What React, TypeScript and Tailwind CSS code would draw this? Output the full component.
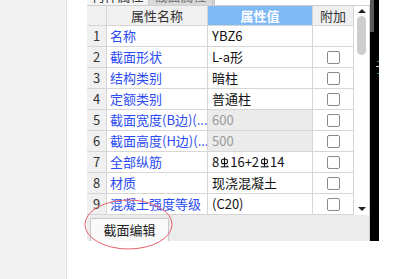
import React from 'react';

type Row = { no: number; name: string; value: React.ReactNode; dim?: boolean; check: boolean };

const Rebar = () => (
  <svg width="9" height="11" viewBox="0 0 9 11" className="mx-[1px] inline-block">
    <rect x="1.6" y="2.2" width="5.8" height="4.4" rx="1.2" fill="none" stroke="#111" strokeWidth="1.1" />
    <line x1="4.5" y1="0.3" x2="4.5" y2="9.8" stroke="#111" strokeWidth="1.1" />
    <line x1="0.6" y1="9.8" x2="8.4" y2="9.8" stroke="#111" strokeWidth="1.1" />
    <line x1="7" y1="8.2" x2="8.2" y2="9.6" stroke="#111" strokeWidth="0.9" />
  </svg>
);

const rows: Row[] = [
  { no: 1, name: '名称', value: 'YBZ6', check: false },
  { no: 2, name: '截面形状', value: 'L-a形', check: true },
  { no: 3, name: '结构类别', value: '暗柱', check: true },
  { no: 4, name: '定额类别', value: '普通柱', check: true },
  { no: 5, name: '截面宽度(B边)(...', value: '600', dim: true, check: true },
  { no: 6, name: '截面高度(H边)(...', value: '500', dim: true, check: true },
  {
    no: 7,
    name: '全部纵筋',
    value: (
      <span className="flex items-center">
        8<Rebar />16+2<Rebar />14
      </span>
    ),
    check: true,
  },
  { no: 8, name: '材质', value: '现浇混凝土', check: true },
  { no: 9, name: '混凝土强度等级', value: '(C20)', check: true },
];

export default function App() {
  return (
    <div
      className="relative flex w-[417px] h-[279px] overflow-hidden bg-white text-[13px] text-[#111]"
      style={{ fontFamily: '"Noto Sans CJK SC", "Noto Sans", sans-serif' }}
    >
      <div className="w-[67px] h-full bg-[#f3f3f4] border-r border-[#e2e2e4]" />
      <div className="w-[20px]" />

      <div className="flex h-[241px]">
        <div className="flex flex-col w-[283px]">
          {/* tab strip, mostly scrolled out of view */}
          <div className="flex h-[6px] border-b border-[#cfcfcf] overflow-hidden">
            <div className="w-[62px] bg-[#f4f4f4] border-r border-[#c8c8c8] flex items-end justify-center">
              <span className="leading-[13px] mb-[3px] text-[#333]">构件属性</span>
            </div>
            <div className="w-[64px] bg-[#d9d9d9] border-r border-[#c4c4c4] flex items-end justify-center">
              <span className="leading-[13px] mb-[3px] text-[#777]">截面属性</span>
            </div>
            <div className="w-[2px] bg-[#d9d9d9] border-r border-[#c4c4c4]" />
            <div className="flex-1 bg-white" />
          </div>

          <div className="flex h-[209px]">
            <div className="w-[267px] flex flex-col">
              <div className="flex h-[20px] border-b border-[#d6d6d6]">
                <div className="w-[20px] bg-[#f0f0f0] border-r border-[#d6d6d6]" />
                <div className="w-[101px] bg-[#f0f0f0] border-r border-[#d6d6d6] flex items-center justify-center text-[#333]">
                  属性名称
                </div>
                <div className="w-[105px] bg-[#7fbaf6] border-r border-[#d6d6d6] flex items-center justify-center text-white font-bold">
                  属性值
                </div>
                <div className="w-[41px] bg-[#f0f0f0] border-r border-[#d6d6d6] flex items-center justify-center text-[#333]">
                  附加
                </div>
              </div>
              {rows.map((r) => (
                <div key={r.no} className="flex h-[21px] border-b border-[#d6d6d6]">
                  <div className="w-[20px] bg-[#f0f0f0] border-r border-[#d6d6d6] flex items-center justify-center text-[#333]">
                    {r.no}
                  </div>
                  <div className="w-[101px] border-r border-[#d6d6d6] flex items-center pl-[3px] text-[#2b4cf2] whitespace-nowrap overflow-hidden">
                    {r.name}
                  </div>
                  <div
                    className={`w-[105px] border-r border-[#d6d6d6] flex items-center pl-[4px] whitespace-nowrap ${
                      r.dim ? 'bg-[#ebebeb] text-[#9a9a9a]' : 'text-[#111]'
                    }`}
                  >
                    {r.value}
                  </div>
                  <div className="w-[41px] border-r border-[#d6d6d6] flex items-center justify-center">
                    {r.check && <div className="w-[13px] h-[13px] rounded-[2px] border border-[#8a8a8a] bg-white" />}
                  </div>
                </div>
              ))}
            </div>
            {/* scrollbar */}
            <div className="w-[16px] border-r border-[#d0d0d0] bg-white flex flex-col items-center">
              <div className="mt-[3px] w-0 h-0 border-l-[4px] border-r-[4px] border-b-[4px] border-l-transparent border-r-transparent border-b-[#222]" />
              <div className="mt-[3px] w-[9px] h-[39px] rounded-full bg-[#cdcdcd]" />
              <div className="flex-1" />
              <div className="mb-[4px] w-0 h-0 border-l-[4px] border-r-[4px] border-t-[4px] border-l-transparent border-r-transparent border-t-[#222]" />
            </div>
          </div>

          <div className="flex-1 bg-[#ececec] border-r border-[#d0d0d0] pl-[3px] pt-[3px]">
            <div className="w-[79px] h-full bg-[#f9f9f9] border border-b-0 border-[#c8c8c8] rounded-t-[2px] flex items-center justify-center text-[#222]">
              截面编辑
            </div>
          </div>
        </div>

        <div className="relative w-[9px] bg-black">
          <div className="absolute left-0 top-0 w-[4px] h-[32px] bg-[#5a5a5a]" />
          <div className="absolute left-[7px] top-[61px] w-[2px] h-[1px] bg-[#3c8c3c]" />
          <div className="absolute left-[6px] top-[66px] w-[3px] h-[1px] bg-[#d8d8d8]" />
          <div className="absolute left-[7px] top-[73px] w-[2px] h-[1px] bg-[#3c8c3c]" />
        </div>
      </div>

      <svg className="absolute left-[84px] top-[199px]" width="90" height="52" viewBox="0 0 90 52">
        <ellipse cx="44.5" cy="25.5" rx="43.5" ry="24.5" fill="none" stroke="#e8606a" strokeWidth="1" />
      </svg>
    </div>
  );
}
